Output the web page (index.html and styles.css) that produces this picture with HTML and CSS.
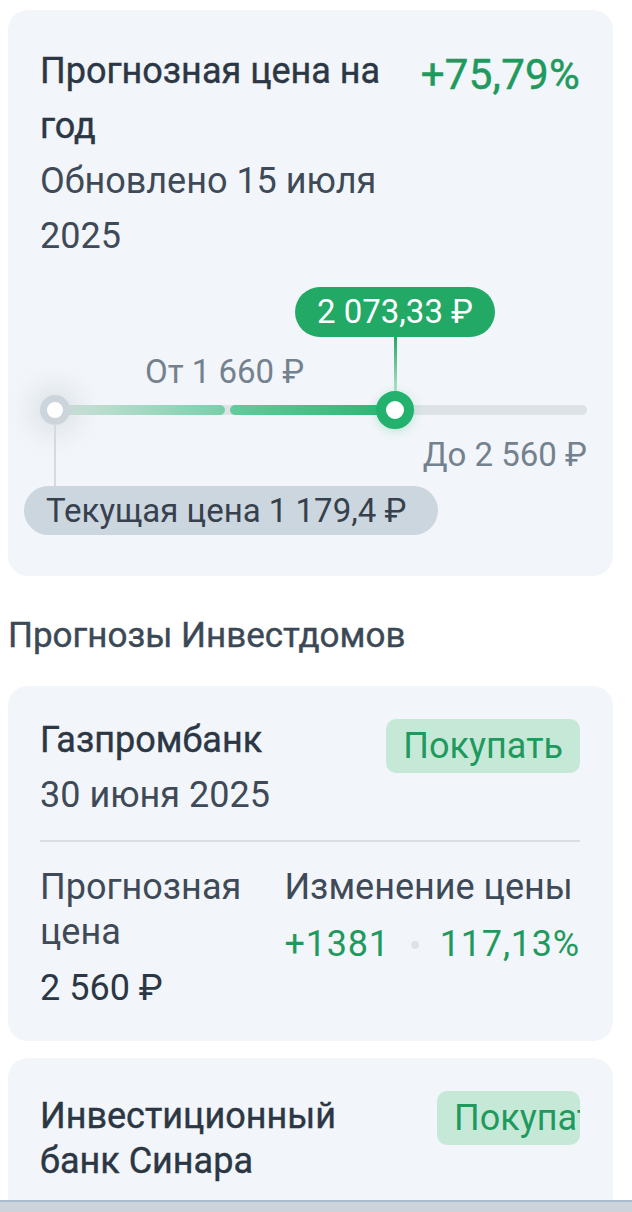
FILE: index.html
```html
<html>
  <head>
    <title>Прогнозы</title>
    <meta charset="utf-8" />
    <link rel="stylesheet" href="styles.css">
  </head>
  <body>
    <div id="page">
      <div class="card forecast">
        <div class="head">
          <div class="head-text">
            <h2>Прогнозная цена на год</h2>
            <p class="updated">Обновлено 15 июля 2025</p>
          </div>
          <div class="growth">+75,79%</div>
        </div>

        <div class="range">
          <div class="target">2 073,33 ₽</div>
          <div class="stem"></div>
          <div class="from">От 1 660 ₽</div>
          <div class="track"></div>
          <div class="seg seg-low"></div>
          <div class="seg seg-high"></div>
          <div class="knob knob-cur"></div>
          <div class="knob knob-target"></div>
          <div class="to">До 2 560 ₽</div>
          <div class="drop"></div>
          <div class="current">Текущая цена 1 179,4 ₽</div>
        </div>
      </div>

      <h3 class="section">Прогнозы Инвестдомов</h3>

      <div class="card house">
        <div class="head">
          <div class="head-text">
            <h2>Газпромбанк</h2>
            <p class="date">30 июня 2025</p>
          </div>
          <div class="badge">Покупать</div>
        </div>
        <hr />
        <div class="stats">
          <div class="col">
            <div class="label">Прогнозная цена</div>
            <div class="value">2 560 ₽</div>
          </div>
          <div class="col">
            <div class="label">Изменение цены</div>
            <div class="change">+1381 <span class="dot"></span> 117,13%</div>
          </div>
        </div>
      </div>

      <div class="card house">
        <div class="head">
          <div class="head-text">
            <h2 class="tight">Инвестиционный банк Синара</h2>
            <p class="date low">01 июля 2025</p>
          </div>
          <div class="badge clip">Покупать</div>
        </div>
      </div>
    </div>
    <div id="navbar"></div>
  </body>
</html>
```

FILE: styles.css
```css
* {
  padding: 0;
  margin: 0;
  box-sizing: border-box;
}
body {
  font-family: Roboto, "Noto Sans", sans-serif;
  color: #2b3744;
  background: #ffffff;
  overflow: hidden;
  height: 1212px;
}
#page {
  padding: 10px 19px 0 8px;
}
.card {
  background-color: #f2f5f9;
  border-radius: 20px;
  padding: 34px 33px 0 32px;
}
.head {
  display: flex;
  justify-content: space-between;
  align-items: flex-start;
  gap: 20px;
}
h2 {
  font-size: 36px;
  font-weight: 400;
  line-height: 55px;
  color: #2b3744;
  -webkit-text-stroke: 0.4px #2b3744;
}
.updated, .date {
  font-size: 36px;
  line-height: 55px;
  color: #3e4a57;
}
.date.low {
  margin-top: 4px;
}
.forecast .head-text {
  width: 350px;
}
.growth {
  font-size: 42px;
  font-weight: 400;
  color: #1f9a5e;
  line-height: 55px;
  padding-top: 3px;
  letter-spacing: 0.3px;
  -webkit-text-stroke: 0.5px #1f9a5e;
}

/* slider */
.range {
  position: relative;
  height: 248px;
  margin: 23px -33px 0 -32px;
}
.range > div {
  position: absolute;
}
.target {
  left: 287px;
  top: 0;
  width: 200px;
  height: 50px;
  border-radius: 25px;
  background: #21a965;
  color: #ffffff;
  font-size: 33px;
  line-height: 50px;
  text-align: center;
}
.stem {
  left: 386px;
  top: 50px;
  width: 3px;
  height: 58px;
  background: linear-gradient(#21a965, #bfe5d2);
}
.from {
  left: 137px;
  top: 66px;
  font-size: 33px;
  line-height: 38px;
  color: #74818e;
}
.to {
  right: 26px;
  top: 149px;
  font-size: 33px;
  line-height: 38px;
  color: #74818e;
}
.track {
  left: 47px;
  top: 118px;
  width: 532px;
  height: 10px;
  border-radius: 5px;
  background: #dde2e7;
}
.seg {
  top: 118px;
  height: 10px;
  border-radius: 5px;
}
.seg-low {
  left: 47px;
  width: 170px;
  background: linear-gradient(90deg, #d3e2dc, #78cfaa);
}
.seg-high {
  left: 222px;
  width: 165px;
  background: linear-gradient(90deg, #63cb9c, #29b572);
}
.knob {
  border-radius: 50%;
  background: #ffffff;
}
.knob-cur {
  left: 32px;
  top: 108px;
  width: 30px;
  height: 30px;
  border: 7px solid #ccd4dc;
  box-shadow: 0 0 22px 10px rgba(190, 200, 210, 0.35);
}
.knob-target {
  left: 368px;
  top: 104px;
  width: 38px;
  height: 38px;
  border: 10px solid #22b26d;
  box-shadow: 0 2px 10px rgba(34, 178, 109, 0.25);
}
.drop {
  left: 46px;
  top: 137px;
  width: 2px;
  height: 62px;
  background: #d3dae1;
}
.current {
  left: 16px;
  top: 199px;
  width: 414px;
  height: 49px;
  border-radius: 25px;
  background: #ccd6df;
  color: #36414d;
  font-size: 33px;
  line-height: 49px;
  padding-left: 22px;
}
.forecast {
  padding-bottom: 41px;
}

.section {
  font-size: 35px;
  font-weight: 400;
  color: #3b4856;
  line-height: 40px;
  margin: 40px 0 30px 0;
  -webkit-text-stroke: 0.4px #3b4856;
}

/* investment houses */
.house {
  margin-bottom: 17px;
  padding-top: 27px;
  padding-bottom: 25px;
}
.badge {
  margin-top: 6px;
  height: 54px;
  padding: 0 17px;
  border-radius: 10px;
  background: #c6e9d7;
  color: #1f9a5e;
  font-size: 36px;
  line-height: 54px;
  white-space: nowrap;
}
.badge.clip {
  width: 143px;
  overflow: hidden;
}
h2.tight {
  line-height: 45px;
  padding-top: 9px;
  max-width: 320px;
}
hr {
  border: none;
  height: 2px;
  background: #d9dee4;
  margin: 17px 0 23px 0;
}
.stats {
  display: flex;
}
.col:first-child {
  width: 247px;
}
.label {
  font-size: 36px;
  line-height: 45px;
  color: #3e4a57;
}
.col:first-child .label {
  width: 220px;
}
.value {
  font-size: 36px;
  line-height: 55px;
  color: #2b3744;
  margin-top: 6px;
}
.change {
  font-size: 36px;
  line-height: 55px;
  color: #1f9a5e;
  display: flex;
  align-items: center;
  gap: 21px;
  margin-top: 7px;
  letter-spacing: 0.8px;
}
.dot {
  width: 8px;
  height: 8px;
  border-radius: 50%;
  background: #dfe3e8;
}
#navbar {
  position: fixed;
  left: 0;
  right: 0;
  top: 1200px;
  height: 12px;
  background: #ccd3db;
  border-top: 2px solid #a9bccf;
}
```
